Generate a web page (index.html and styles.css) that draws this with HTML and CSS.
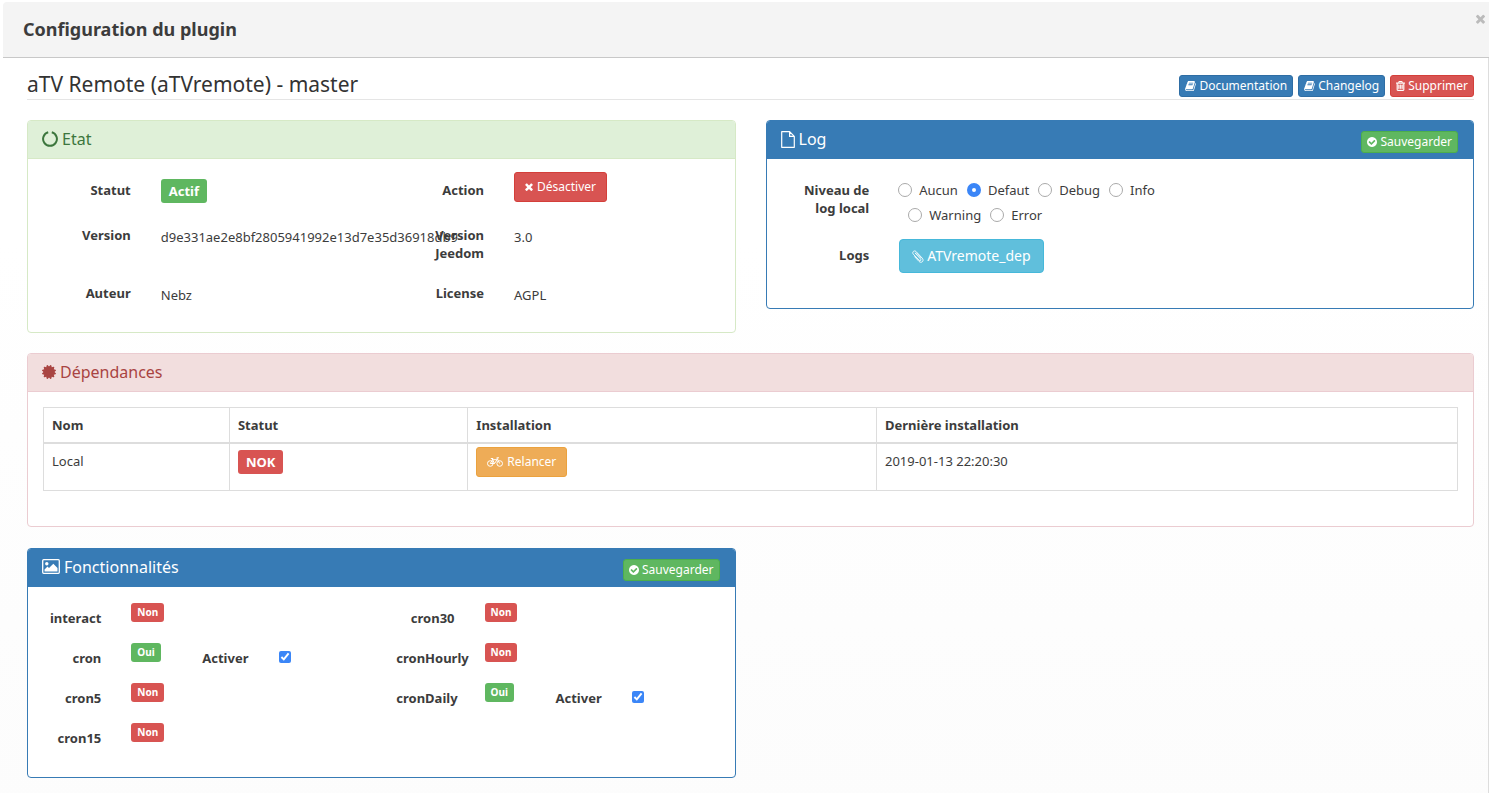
FILE: index.html
```html
<!DOCTYPE html>
<html lang="fr">
<head>
<meta charset="utf-8">
<title>Configuration du plugin</title>
<link rel="stylesheet" href="styles.css">
</head>
<body>
<svg class="sprite" aria-hidden="true">
  <symbol id="i-check" viewBox="128 128 1536 1536"><path d="M1412 734q0-28-18-46l-91-90q-19-19-45-19t-45 19l-408 407-226-226q-19-19-45-19t-45 19l-91 90q-18 18-18 46 0 27 18 45l362 362q19 19 45 19 27 0 46-19l543-543q18-18 18-45zm252 162q0 209-103 385.5t-279.5 279.5-385.5 103-385.5-103-279.5-279.5-103-385.5 103-385.5 279.5-279.5 385.5-103 385.5 103 279.5 279.5 103 385.5z"/></symbol>
  <symbol id="i-times" viewBox="302 302 1188 1252"><path d="M1490 1322q0 40-28 68l-136 136q-28 28-68 28t-68-28l-294-294-294 294q-28 28-68 28t-68-28l-136-136q-28-28-28-68t28-68l294-294-294-294q-28-28-28-68t28-68l136-136q28-28 68-28t68 28l294 294 294-294q28-28 68-28t68 28l136 136q28 28 28 68t-28 68l-294 294 294 294q28 28 28 68z"/></symbol>
  <symbol id="i-trash" viewBox="192 128 1408 1536"><path d="M704 736v576q0 14-9 23t-23 9h-64q-14 0-23-9t-9-23v-576q0-14 9-23t23-9h64q14 0 23 9t9 23zm256 0v576q0 14-9 23t-23 9h-64q-14 0-23-9t-9-23v-576q0-14 9-23t23-9h64q14 0 23 9t9 23zm256 0v576q0 14-9 23t-23 9h-64q-14 0-23-9t-9-23v-576q0-14 9-23t23-9h64q14 0 23 9t9 23zm128 724v-948h-896v948q0 22 7 40.5t14.5 27 10.5 8.5h832q3 0 10.5-8.5t14.5-27 7-40.5zm-672-1076h448l-48-117q-7-9-17-11h-317q-10 2-17 11zm928 32v64q0 14-9 23t-23 9h-96v948q0 83-47 143.5t-113 60.5h-832q-66 0-113-58.5t-47-141.5v-952h-96q-14 0-23-9t-9-23v-64q0-14 9-23t23-9h309l70-167q15-37 54-63t79-26h320q40 0 79 26t54 63l70 167h309q14 0 23 9t9 23z" stroke="currentColor" stroke-width="60"/></symbol>
  <symbol id="i-book" viewBox="64 128 1664 1536"><path d="M1703 478q40 57 18 129l-275 906q-19 64-76.5 107.5t-122.5 43.5h-923q-77 0-148.5-53.5t-99.5-131.5q-24-67-2-127 0-4 3-27t4-37q1-8-3-21.5t-3-19.5q2-11 8-21t16.5-23.5 16.5-23.5q23-38 45-91.5t30-91.5q3-10 .5-30t-.5-28q3-11 17-28t17-23q21-36 42-92t25-90q1-9-2.5-32t.5-28q4-13 22-30.5t22-22.5q19-26 42.5-84.5t27.5-96.5q1-8-3-25.5t-2-26.5q2-8 9-18t18-23 17-21q8-12 16.5-30.5t15-35 16-36 19.5-32 26.5-23.5 36-11.5 47.5 5.5l-1 3q38-9 51-9h761q74 0 114 56t18 130l-274 906q-36 119-71.5 153.5t-128.5 34.5h-869q-27 0-38 15-11 16-1 43 24 70 144 70h923q29 0 56-15.5t35-41.5l300-987q7-22 5-57 38 15 59 43zm-1064 2q-4 13 2 22.5t20 9.5h608q13 0 25.5-9.5t16.5-22.5l21-64q4-13-2-22.5t-20-9.5h-608q-13 0-25.5 9.5t-16.5 22.5zm-83 256q-4 13 2 22.5t20 9.5h608q13 0 25.5-9.5t16.5-22.5l21-64q4-13-2-22.5t-20-9.5h-608q-13 0-25.5 9.5t-16.5 22.5z"/></symbol>
  <symbol id="i-cert" viewBox="128 128 1536 1536"><path d="M1504 896l138 135q30 28 20 70-12 41-52 51l-188 48 53 186q12 41-19 70-29 31-70 19l-186-53-48 188q-10 40-51 52-12 2-19 2-31 0-51-22l-135-138-135 138q-28 30-70 20-41-11-51-52l-48-188-186 53q-41 12-70-19-31-29-19-70l53-186-188-48q-40-10-52-51-10-42 20-70l138-135-138-135q-30-28-20-70 12-41 52-51l188-48-53-186q-12-41 19-70 29-31 70-19l186 53 48-188q10-41 51-51 41-12 70 19l135 139 135-139q29-30 70-19 41 10 51 51l48 188 186-53q41-12 70 19 31 29 19 70l-53 186 188 48q40 10 52 51 10 42-20 70z"/></symbol>
  <symbol id="i-notch" viewBox="0 0 16 16"><path d="M6.200 1.300A6.900 6.900 0 1 0 9.800 1.300" fill="none" stroke="currentColor" stroke-width="2"/></symbol>
  <symbol id="i-file" viewBox="0 0 14 17"><path d="M1 .7h7.600L13.300 5.400v10.900H.7V.7zM8.600.7v4.700h4.700" fill="none" stroke="currentColor" stroke-width="1.200" stroke-linejoin="round"/></symbol>
  <symbol id="i-picture" viewBox="0 0 18 15"><rect x=".7" y=".7" width="16.600" height="13.600" rx="1" fill="none" stroke="currentColor" stroke-width="1.300"/><circle cx="4.800" cy="4.700" r="1.700"/><path d="M2.500 12.500v-2L5.500 7.600 7 9.100l4.300-4.300 4.200 4.200v3.500z"/></symbol>
  <symbol id="i-clip" viewBox="0 0 12 13"><path d="M3.200 3.200l5.400 5.800c1 1.100-.4 2.300-1.400 1.300L1.300 4.200C-.3 2.300 2-.1 3.900 1.400l6.300 6.700c2.500 2.900-.9 5.600-3.200 3.300L2.600 6.700M4.400 2.800l4.800 5.100" fill="none" stroke="currentColor" stroke-width=".9" stroke-linecap="round"/></symbol>
  <symbol id="i-bike" viewBox="0 0 16 10"><g fill="none" stroke="currentColor" stroke-width="1"><circle cx="3.300" cy="6.500" r="2.800"/><circle cx="12.700" cy="6.500" r="2.800"/><path d="M3.300 6.500l2.200-3.800h4.700L7.500 6.500H3.300M7.500 6.500L5 1.500M3.800 1.500h2.400M12.700 6.500L9.800.8h2.200"/></g></symbol>
</svg>

<header class="dialog-head">
  <h1 class="dialog-title">Configuration du plugin</h1>
  <button class="close" type="button" aria-label="Fermer"><svg class="icon close-icon"><use href="#i-times"/></svg></button>
</header>

<main class="dialog-body">
  <div class="plugin-head">
    <h2 class="plugin-name">aTV Remote (aTVremote) - master</h2>
    <div class="plugin-actions">
      <a class="btn btn-xs primary" href="#doc"><svg class="icon ic-book"><use href="#i-book"/></svg>Documentation</a>
      <a class="btn btn-xs primary" href="#changelog"><svg class="icon ic-book"><use href="#i-book"/></svg>Changelog</a>
      <button class="btn btn-xs danger" type="button"><svg class="icon ic-trash"><use href="#i-trash"/></svg>Supprimer</button>
    </div>
  </div>

  <div class="columns">
    <section class="panel panel-success">
      <header class="panel-head"><h3 class="panel-title"><svg class="icon ic-16"><use href="#i-notch"/></svg>Etat</h3></header>
      <div class="panel-body state">
        <div class="row row-state first">
          <span class="label">Statut</span>
          <div class="cell"><span class="badge badge-lg success">Actif</span></div>
          <span class="label">Action</span>
          <div class="cell"><button class="btn btn-sm danger raised" type="button"><svg class="icon ic-8"><use href="#i-times"/></svg>Désactiver</button></div>
        </div>
        <div class="row row-state">
          <span class="label">Version</span>
          <div class="cell value">d9e331ae2e8bf2805941992e13d7e35d36918db9</div>
          <span class="label">Version Jeedom</span>
          <div class="cell value">3.0</div>
        </div>
        <div class="row row-state">
          <span class="label">Auteur</span>
          <div class="cell value">Nebz</div>
          <span class="label">License</span>
          <div class="cell value">AGPL</div>
        </div>
      </div>
    </section>

    <section class="panel panel-primary">
      <header class="panel-head">
        <h3 class="panel-title"><svg class="icon ic-file"><use href="#i-file"/></svg>Log</h3>
        <button class="btn btn-xs success" type="button"><svg class="icon ic-10"><use href="#i-check"/></svg>Sauvegarder</button>
      </header>
      <div class="panel-body">
        <div class="row row-log">
          <span class="label" id="level">Niveau de log local</span>
          <div class="cell levels" role="radiogroup" aria-labelledby="level">
            <div class="level-line">
              <label class="level"><input class="radio" type="radio" name="level">Aucun</label>
              <label class="level"><input class="radio" type="radio" name="level" checked>Defaut</label>
              <label class="level"><input class="radio" type="radio" name="level">Debug</label>
              <label class="level"><input class="radio" type="radio" name="level">Info</label>
            </div>
            <div class="level-line indented">
              <label class="level"><input class="radio" type="radio" name="level">Warning</label>
              <label class="level"><input class="radio" type="radio" name="level">Error</label>
            </div>
          </div>
        </div>
        <div class="row row-log">
          <span class="label">Logs</span>
          <div class="cell"><a class="btn btn-md info" href="#log"><svg class="icon ic-clip"><use href="#i-clip"/></svg>ATVremote_dep</a></div>
        </div>
      </div>
    </section>
  </div>

  <section class="panel panel-danger">
    <header class="panel-head"><h3 class="panel-title"><svg class="icon ic-14"><use href="#i-cert"/></svg>Dépendances</h3></header>
    <div class="panel-body">
      <table class="table">
        <colgroup><col class="c-name"><col class="c-status"><col class="c-install"><col></colgroup>
        <thead><tr><th>Nom</th><th>Statut</th><th>Installation</th><th>Dernière installation</th></tr></thead>
        <tbody><tr>
          <td>Local</td>
          <td class="tight"><span class="badge badge-lg danger">NOK</span></td>
          <td class="tight"><button class="btn btn-sm warning" type="button"><svg class="icon ic-bike"><use href="#i-bike"/></svg>Relancer</button></td>
          <td>2019-01-13 22:20:30</td>
        </tr></tbody>
      </table>
    </div>
  </section>

  <div class="columns">
    <section class="panel panel-primary">
      <header class="panel-head">
        <h3 class="panel-title"><svg class="icon ic-picture"><use href="#i-picture"/></svg>Fonctionnalités</h3>
        <button class="btn btn-xs success" type="button"><svg class="icon ic-10"><use href="#i-check"/></svg>Sauvegarder</button>
      </header>
      <div class="panel-body features">
        <div class="feature-col">
          <div class="row row-feature"><span class="label">interact</span><div class="cell"><span class="badge danger">Non</span></div></div>
          <div class="row row-feature"><span class="label">cron</span><div class="cell"><span class="badge success">Oui</span></div><label class="label" for="cron">Activer</label><div class="cell"><input class="check" id="cron" type="checkbox" checked></div></div>
          <div class="row row-feature"><span class="label">cron5</span><div class="cell"><span class="badge danger">Non</span></div></div>
          <div class="row row-feature"><span class="label">cron15</span><div class="cell"><span class="badge danger">Non</span></div></div>
        </div>
        <div class="feature-col">
          <div class="row row-feature"><span class="label">cron30</span><div class="cell"><span class="badge danger">Non</span></div></div>
          <div class="row row-feature"><span class="label">cronHourly</span><div class="cell"><span class="badge danger">Non</span></div></div>
          <div class="row row-feature"><span class="label">cronDaily</span><div class="cell"><span class="badge success">Oui</span></div><label class="label" for="daily">Activer</label><div class="cell"><input class="check" id="daily" type="checkbox" checked></div></div>
        </div>
      </div>
    </section>
  </div>
</main>
</body>
</html>
```
FILE: styles.css
```css
* { box-sizing: border-box; }

body {
  margin: 0;
  padding: 2px 0 0 3px;
  min-height: 100vh;
  display: flex;
  flex-direction: column;
  background: linear-gradient(#fff 30%, #fcfcfc);
  color: #3c3c3c;
  font: 13px/18px "Noto Sans", sans-serif;
}

h1, h2, h3 { margin: 0; font-weight: 400; }

button { font-family: inherit; }

.sprite { display: none; }

.icon { fill: currentColor; flex: none; width: 12px; height: 12px; }
.ic-book { width: 11px; height: 10px; }
.ic-trash { width: 9px; height: 10px; }
.ic-8 { width: 8px; height: 8px; }
.ic-10 { width: 10px; height: 10px; }
.ic-14 { width: 14px; height: 14px; }
.ic-16 { width: 16px; height: 16px; }
.ic-file { width: 14px; height: 17px; }
.ic-picture { width: 18px; height: 15px; }
.ic-clip { width: 12px; height: 13px; }
.ic-bike { width: 16px; height: 10px; }

.dialog-head {
  display: flex;
  justify-content: space-between;
  align-items: flex-start;
  padding: 16px 4px 16px 20px;
  background: #f4f4f4;
  border-bottom: 1px solid #c8c8c8;
  border-top-left-radius: 4px;
}
.dialog-title { font-size: 18px; line-height: 23px; font-weight: 700; }
.close { display: flex; padding: 0; border: 0; background: none; color: #bbb; cursor: pointer; margin-top: -4px; }
.close-icon { width: 9px; height: 10px; }

.dialog-body {
  flex: 1;
  padding: 11px 14px 15px 24px;
  border-right: 1px solid #ddd;
}

.plugin-head {
  display: flex;
  justify-content: space-between;
  align-items: center;
  margin-bottom: 20px;
  border-bottom: 1px solid #e5e5e5;
}
.plugin-name { font-size: 21px; line-height: 30px; color: #333; }
.plugin-actions { display: flex; gap: 5px; margin-top: 4px; }

.btn {
  display: inline-flex;
  align-items: center;
  border: 1px solid;
  border-radius: 3px;
  color: #fff;
  text-decoration: none;
  white-space: nowrap;
  cursor: pointer;
}
.btn-xs { gap: 3px; padding: 1px 5px; font-size: 12px; line-height: 18px; }
.btn-sm { gap: 4px; padding: 5px 10px; font-size: 12px; line-height: 18px; }
.btn-md { gap: 3px; padding: 6px 12px; font-size: 14px; line-height: 20px; border-radius: 4px; }

.primary { background: #377bb5; border-color: #2e6da4; }
.danger { background: #d85452; border-color: #d43f3a; }
.success { background: #5fb760; border-color: #4cae4c; }
.warning { background: #eeac57; border-color: #eba23e; }
.info { background: #60bfdc; border-color: #46b8da; }

.columns {
  display: grid;
  grid-template-columns: 1fr 1fr;
  column-gap: 30px;
  align-items: start;
}

.panel {
  margin-bottom: 20px;
  border: 1px solid;
  border-radius: 4px;
  background: #fff;
}
.panel-head {
  display: flex;
  justify-content: space-between;
  min-height: 38px;
  padding: 8px 15px 5px 14px;
  border-bottom: 1px solid;
  border-color: inherit;
  border-radius: 3px 3px 0 0;
}
.panel-head .btn { margin-top: 2px; }
.panel-title { display: flex; align-items: center; gap: 4px; height: 20px; font-size: 16px; line-height: 20px; }
.panel-body { padding: 15px; }

.panel.panel-success { border-color: #d6e9c6; }
.panel-success .panel-head { background: #dff0d8; color: #3c763d; }
.panel.panel-primary { border-color: #377bb5; }
.panel-primary .panel-head { background: #377bb5; color: #fff; }
.panel.panel-danger { margin-bottom: 21px; border-color: #ebccd1; }
.panel-danger .panel-head { background: #f2dede; color: #a94442; }

.row { display: grid; margin: 0 -15px 15px; }
.row-state { grid-template-columns: 2fr 4fr 2fr 4fr; }
.row-state.first { height: 30px; }
.row-log { grid-template-columns: 2fr 10fr; }
.row-log:last-child { margin-bottom: 20px; }
.row-feature { grid-template-columns: 3fr 2fr 3fr 4fr; height: 25px; margin: 0 0 15px; }
.state { padding-bottom: 13px; }

.label { min-width: 0; padding: 7px 15px 0; font-weight: 700; text-align: right; }
.cell { min-width: 0; padding: 0 15px; }
.value { padding-top: 9px; }
.raised { margin-top: -2px; }

.levels { padding-left: 14px; }
.level-line { display: flex; gap: 9px; height: 25px; padding-top: 7px; }
.indented { padding-left: 10px; }
.level { display: flex; align-items: center; gap: 7px; height: 18px; }
.radio {
  appearance: none;
  width: 14px;
  height: 14px;
  margin: 0;
  border: 1px solid #aaa;
  border-radius: 50%;
  background: #fff;
}
.radio:checked { border: 5px solid #3b86f7; }

.badge {
  display: block;
  width: fit-content;
  margin-top: 1px;
  padding: 0 6px;
  border-radius: 3px;
  color: #fff;
  font-size: 10px;
  line-height: 19px;
  font-weight: 700;
}
.badge-lg { margin-top: 5px; padding: 0 8px; font-size: 13px; line-height: 24px; }

.table {
  width: 100%;
  margin-bottom: 20px;
  border-collapse: collapse;
  table-layout: fixed;
}
.c-name { width: 13.15%; }
.c-status { width: 16.86%; }
.c-install { width: 28.9%; }
.table th, .table td { padding: 8px; border: 1px solid #ddd; text-align: left; vertical-align: top; }
.table th { border-bottom-width: 2px; }
.table td { height: 47px; }
.table td.tight { padding-top: 3px; padding-bottom: 0; }
.tight .badge-lg { margin-top: 3px; }

.features { display: grid; grid-template-columns: 1fr 1fr; padding: 15px 0; }
.row-feature .label { white-space: nowrap; }
.check { display: block; width: 12px; height: 12px; margin: 9px 0 0; accent-color: #3b86f7; }
```
